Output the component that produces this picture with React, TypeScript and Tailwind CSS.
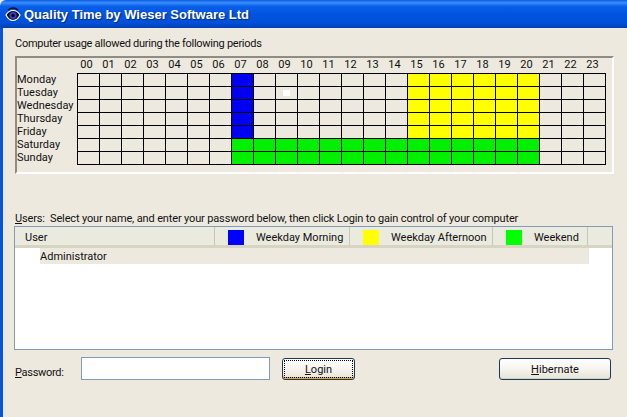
const days = ['Monday', 'Tuesday', 'Wednesday', 'Thursday', 'Friday', 'Saturday', 'Sunday'];
const hours = Array.from({ length: 24 }, (_, i) => String(i).padStart(2, '0'));

const cellColor = (day: number, hour: number) => {
  if (day < 5 && hour === 7) return 'bg-[#0000f0]';
  if (day < 5 && hour >= 15 && hour <= 20) return 'bg-[#ffff00]';
  if (day >= 5 && hour >= 7 && hour <= 20) return 'bg-[#00f000]';
  return 'bg-[#ede9df]';
};

const EyeIcon = () => (
  <svg width="16" height="15" viewBox="0 0 16 15" className="shrink-0">
    <path d="M1 8 C3 4.5 5.5 3.5 8 3.5 C10.5 3.5 13 4.5 15 8 C13 12 10.5 13.5 8 13.5 C5.5 13.5 3 12 1 8 Z" fill="#0c0e28" stroke="#fff" strokeWidth="1.2" />
    <circle cx="8" cy="8.5" r="3.6" fill="#3a3fc0" />
    <circle cx="8" cy="8.5" r="1.8" fill="#05071f" />
    <path d="M3 3 C6 0.5 10 0.5 13 3" fill="none" stroke="#0c0e28" strokeWidth="1.4" />
  </svg>
);

const LegendColumn = ({ swatch, label, width }: { swatch: string; label: string; width: string }) => (
  <div className={`flex items-center h-full pl-[13px] pt-[3px] border-r border-[#c9c6b4] ${width}`}>
    <div className={`w-4 h-[15px] ${swatch}`} />
    <span className="ml-3">{label}</span>
  </div>
);

const XpButton = ({ hot, width, children }: { hot?: boolean; width: string; children: React.ReactNode }) => (
  <button className={`h-[22px] ${width} rounded-[3px] border border-[#1c3a56] bg-gradient-to-b from-white via-[#f6f4ee] to-[#e6e3d6] p-[1px] ${hot ? 'shadow-[inset_0_-2px_0_#e5a33a]' : 'shadow-[inset_0_-1px_0_#d6d3c6]'}`}>
    <span className={`flex items-center justify-center h-full pt-[1px] ${hot ? 'border border-dotted border-black' : ''}`}>{children}</span>
  </button>
);

export default function App() {
  return (
    <div className="w-[627px] h-[417px] overflow-hidden flex flex-col bg-[#ede9df] text-[#111] text-[11px] leading-[13px] font-['Roboto',sans-serif]">
      {/* title bar */}
      <div className="h-[28px] shrink-0 flex items-center gap-[3px] pl-[5px] pt-[1px] rounded-tl-[6px] bg-[linear-gradient(180deg,#0a5be0_0%,#3b8fff_10%,#0a5fe8_22%,#0054e0_50%,#0050d8_82%,#003fb0_100%)]">
        <EyeIcon />
        <span className="text-white font-bold text-[13px] font-['Liberation_Sans',sans-serif] [text-shadow:1px_1px_1px_#0a2a80]">
          Quality Time by Wieser Software Ltd
        </span>
      </div>

      <div className="flex-1 flex flex-col border-l-[3px] border-[#0855dd] pl-[11px] pr-[14px]">
        <div className="h-[28px] shrink-0 flex items-center pl-[1px] pt-[2px] tracking-[-0.27px]">Computer usage allowed during the following periods</div>

        {/* schedule */}
        <div className="w-[599px] h-[118px] ml-[1px] shrink-0 flex border-t-2 border-l-2 border-t-[#8f8d83] border-l-[#8f8d83] border-r-2 border-b-2 border-r-white border-b-white">
          <div className="w-[60px] shrink-0 pt-[15px]">
            {days.map((d) => (
              <div key={d} className="h-[13px] leading-[13px]">{d}</div>
            ))}
          </div>
          <div>
            <div className="grid grid-cols-[repeat(24,22px)] h-[15px]">
              {hours.map((h) => (
                <div key={h} className="text-center pr-[3px] leading-[13px]">{h}</div>
              ))}
            </div>
            <div className="grid grid-cols-[repeat(24,22px)] w-[529px] border-t border-l border-black">
              {days.map((d, di) =>
                hours.map((h, hi) => (
                  <div key={d + h} className={`h-[13px] border-r border-b border-black flex items-center justify-center ${cellColor(di, hi)}`}>
                    {di === 1 && hi === 9 && <div className="w-[7px] h-[6px] bg-white" />}
                  </div>
                ))
              )}
            </div>
          </div>
        </div>

        <div className="mt-[38px] h-[13px] shrink-0 leading-[14px] pl-[1px] tracking-[-0.145px]">
          <span className="underline">U</span>sers:&nbsp; Select your name, and enter your password below, then click Login to gain control of your computer
        </div>

        {/* user list */}
        <div className="mt-[1px] w-[599px] h-[124px] shrink-0 border border-[#7f9db9] bg-white">
          <div className="h-[21px] flex items-center bg-[#ebeadf] border-b-[3px] border-[#d8d4c4]">
            <div className="w-[200px] h-full flex items-center pl-[10px] pt-[3px] border-r border-[#c9c6b4]">User</div>
            <LegendColumn swatch="bg-[#0000ff]" label="Weekday Morning" width="w-[135px]" />
            <LegendColumn swatch="bg-[#ffff00]" label="Weekday Afternoon" width="w-[143px]" />
            <LegendColumn swatch="bg-[#00ff00]" label="Weekend" width="w-[95px]" />
          </div>
          <div className="ml-[25px] w-[549px] h-[16px] flex items-center bg-[#ede9df]">Administrator</div>
        </div>

        {/* login row */}
        <div className="mt-[7px] ml-[1px] w-[597px] flex items-center">
          <label className="w-[66px] pt-[8px] tracking-[-0.3px]"><span className="underline">P</span>assword:</label>
          <input className="w-[189px] h-[23px] bg-white border border-[#7f9db9] outline-none" />
          <div className="ml-3">
            <XpButton hot width="w-[73px]"><span><span className="underline">L</span>ogin</span></XpButton>
          </div>
          <div className="ml-auto mr-[1px]">
            <XpButton width="w-[112px]"><span><span className="underline">H</span>ibernate</span></XpButton>
          </div>
        </div>
      </div>
    </div>
  );
}
